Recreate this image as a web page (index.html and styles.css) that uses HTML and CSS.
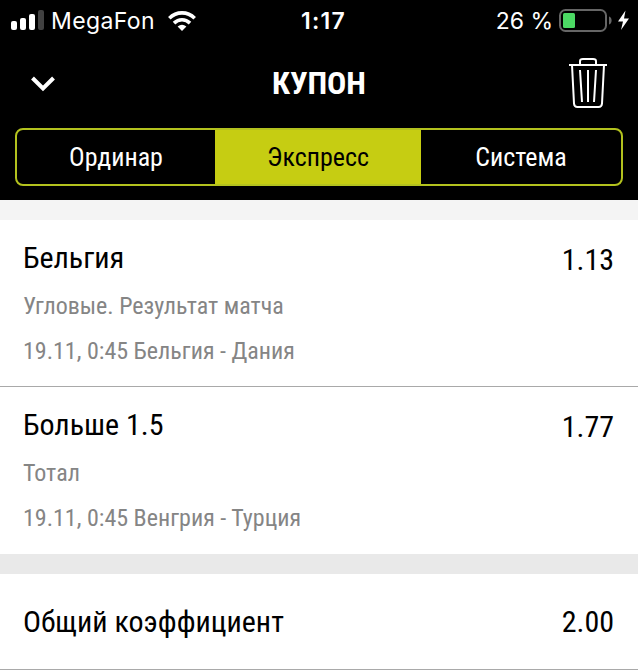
FILE: index.html
```
<!DOCTYPE html>
<html lang="ru">
<head>
    <meta charset="UTF-8">
    <meta name="viewport" content="width=device-width, initial-scale=1.0">
    <title>Купон</title>
    <link rel="stylesheet" href="styles.css">
</head>
<body>
    <header class="header">
        <div class="status">
            <div class="statusLeft">
                <svg class="signal" width="33" height="21" viewBox="0 0 33 21">
                    <rect x="0" y="11" width="6" height="9" rx="2" fill="#fff"/>
                    <rect x="9" y="8" width="6" height="12" rx="2" fill="#fff"/>
                    <rect x="18" y="4" width="6" height="16" rx="2" fill="#fff"/>
                    <rect x="27" y="0" width="6" height="20" rx="2" fill="#424242"/>
                </svg>
                <span class="carrier">MegaFon</span>
                <svg class="wifi" width="28" height="20" viewBox="0 0 28 20">
                    <g fill="none" stroke="#fff" stroke-width="3.6">
                        <path d="M1.3 7.2C8.5 .1 19.5 .1 26.7 7.2"/>
                        <path d="M6 12.1C10.6 7.7 17.4 7.7 22 12.1"/>
                    </g>
                    <path d="M9.6 15.6Q14 11.8 18.4 15.6L14 20Z" fill="#fff"/>
                </svg>
            </div>
            <span class="time">1:17</span>
            <div class="statusRight">
                <span class="percent">26 %</span>
                <svg class="battery" width="71" height="24" viewBox="0 0 71 24">
                    <rect x="1" y="1" width="46" height="21" rx="5.5" fill="none" stroke="#666" stroke-width="2"/>
                    <rect x="4" y="4" width="12" height="15" rx="1.5" fill="#4cd964"/>
                    <path d="M50 7.5C53.5 8.5 53.5 14.5 50 15.5Z" fill="#666"/>
                    <path d="M66.5 1.5L59 12.5H64L62 21L70 9.5H65Z" fill="#fff"/>
                </svg>
            </div>
        </div>
        <div class="titleBar">
            <svg class="chevron" width="24" height="16" viewBox="0 0 24 16">
                <path d="M1.5 2L12 12.5L22.5 2" fill="none" stroke="#fff" stroke-width="4"/>
            </svg>
            <h1 class="title">КУПОН</h1>
            <svg class="trash" width="38" height="51" viewBox="0 0 38 51">
                <g fill="none" stroke="#fff" stroke-width="2">
                    <path d="M0 8H38"/>
                    <path d="M11 7V4Q11 2 14 2H24Q27 2 27 4V7"/>
                    <path d="M3 8L5 46.5Q5.2 50 8.5 50H29.5Q32.8 50 33 46.5L35 8"/>
                    <path d="M11 13L13 45M19 13V45M27 13L25 45"/>
                </g>
            </svg>
        </div>
        <div class="tabs">
            <div class="tab">Ординар</div>
            <div class="tab active">Экспресс</div>
            <div class="tab">Система</div>
        </div>
    </header>
    <main class="coupon">
        <div class="bet">
            <div class="row">
                <span class="name">Бельгия</span>
                <span class="odds">1.13</span>
            </div>
            <div class="info">Угловые. Результат матча</div>
            <div class="info">19.11, 0:45 Бельгия - Дания</div>
        </div>
        <div class="bet">
            <div class="row">
                <span class="name">Больше 1.5</span>
                <span class="odds">1.77</span>
            </div>
            <div class="info">Тотал</div>
            <div class="info">19.11, 0:45 Венгрия - Турция</div>
        </div>
        <div class="total">
            <span class="name">Общий коэффициент</span>
            <span class="odds">2.00</span>
        </div>
    </main>
</body>
</html>
```
FILE: styles.css
```
* {box-sizing: border-box;}
body {
    margin: 0;
    background-color: #fff;
    color: #000;
    font-family: "Roboto Condensed", Roboto, sans-serif;
    font-stretch: 75%;
    overflow: hidden;
}
.header {
    height: 200px;
    padding: 0 15px;
    background-color: #000;
    color: #fff;
}
svg {
    display: block;
    flex: none;
}
.status {
    height: 41px;
    margin: 0 -7px 0 -4px;
    display: grid;
    grid-template-columns: 1fr auto 1fr;
    align-items: center;
    font-family: Inter, sans-serif;
    font-stretch: 100%;
    font-size: 23px;
}
.statusLeft, .statusRight {
    display: flex;
    align-items: center;
}
.statusRight {justify-content: flex-end;}
.carrier {
    margin: 0 13px 0 7px;
    letter-spacing: 0.4px;
}
.time {
    padding-left: 6px;
    font-weight: 600;
    letter-spacing: 1.3px;
}
.percent {margin-right: 6px;}
.titleBar {
    height: 87px;
    padding: 0 16px 4px;
    display: grid;
    grid-template-columns: 1fr auto 1fr;
    align-items: center;
}
.chevron {margin-top: 3px;}
.trash {justify-self: end;}
.title {
    margin: 0;
    font-size: 32px;
    font-weight: 700;
    letter-spacing: -0.1px;
}
.tabs {
    height: 58px;
    display: grid;
    grid-template-columns: 198px 206px 1fr;
    border: 2px solid #b3c21e;
    border-radius: 8px;
    overflow: hidden;
}
.tab {
    display: flex;
    align-items: center;
    justify-content: center;
    font-size: 26px;
}
.active {
    background-color: #c6cd12;
    color: #000;
}
.coupon {border-top: 20px solid #f4f4f4;}
.bet {
    height: 167px;
    padding: 15px 24px 0 23px;
    border-bottom: 1px solid #a9a9a9;
}
.bet + .bet {border-bottom: none;}
.row {
    height: 49px;
    display: flex;
    justify-content: space-between;
}
.name, .odds {
    font-size: 30px;
    line-height: 46px;
}
.odds {margin-top: 2px;}
.info {
    height: 45px;
    color: #858585;
    font-size: 24px;
    line-height: 45px;
}
.total {
    height: 116px;
    padding: 0 24px 0 23px;
    display: flex;
    align-items: center;
    justify-content: space-between;
    border-top: 20px solid #e9e9e9;
    border-bottom: 1px solid #a9a9a9;
}
.total .odds {margin-top: 0;}
```
